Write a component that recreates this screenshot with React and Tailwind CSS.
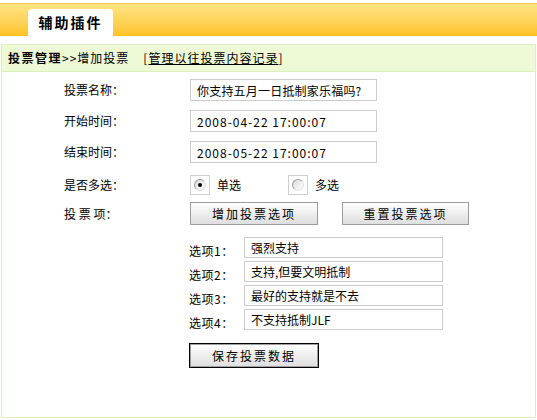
import { useState } from 'react';

const font = { fontFamily: '"Noto Sans CJK SC", "Liberation Sans", sans-serif' };

function Radio({ checked, label, onClick }) {
  return (
    <label className="flex items-center cursor-pointer" onClick={onClick}>
      <span className="w-[20px] h-[20px] border border-[#cfcfcf] flex items-center justify-center bg-white">
        <span className="w-[12px] h-[12px] rounded-full border border-[#9a9a9a] border-b-[#e2e2e2] border-r-[#e2e2e2] bg-gradient-to-br from-[#dcdcdc] to-white flex items-center justify-center">
          {checked && <span className="w-[4px] h-[4px] rounded-full bg-black" />}
        </span>
      </span>
      <span className="ml-[7px] text-[12px]">{label}</span>
    </label>
  );
}

function GrayButton({ children, className = '' }) {
  return (
    <button
      type="button"
      className={`h-[23px] text-[12px] tracking-[2px] text-black bg-gradient-to-b from-white to-[#dedede] border border-[#9c9c9c] flex items-center justify-center ${className}`}
    >
      {children}
    </button>
  );
}

export default function App() {
  const [multi, setMulti] = useState(false);
  const [name, setName] = useState('你支持五月一日抵制家乐福吗?');
  const [start, setStart] = useState('2008-04-22 17:00:07');
  const [end, setEnd] = useState('2008-05-22 17:00:07');
  const [options, setOptions] = useState([
    '强烈支持',
    '支持,但要文明抵制',
    '最好的支持就是不去',
    '不支持抵制JLF',
  ]);

  const inputCls =
    'w-[187px] h-[22px] border border-[#cbcbcb] px-[6px] text-[12px] text-black outline-none bg-white';

  return (
    <div className="w-[537px] h-[420px] bg-white text-black overflow-hidden" style={font}>
      {/* top tab bar */}
      <div className="mt-[3px] h-[33px] border-t border-[#f2c45a] bg-gradient-to-b from-[#ffe584] to-[#ffc21e] flex items-end">
        <div className="ml-[28px] w-[85px] h-[27px] bg-white rounded-t-[4px] flex items-center justify-center text-[14px] font-bold tracking-[2px]">
          辅助插件
        </div>
      </div>

      {/* breadcrumb */}
      <div className="mt-[8px] mx-[1px] h-[28px] bg-[#eef9d6] border border-[#dcefbf] flex items-center pl-[6px] text-[12px] tracking-[1px]">
        <span className="font-bold tracking-[1.5px]">投票管理</span>
        <span>&gt;&gt;增加投票</span>
        <span className="ml-[14px]">[<a href="#" className="underline text-black">管理以往投票内容记录</a>]</span>
      </div>

      {/* form */}
      <div className="mx-[1px] h-[346px] border-l border-r border-b border-[#dcefbf] pt-[7px] text-[12px]">
        <div className="flex items-center h-[22px]">
          <span className="w-[188px] pl-[62px]">投票名称：</span>
          <input className={`${inputCls} tracking-[0.2px]`} value={name} onChange={(e) => setName(e.target.value)} />
        </div>
        <div className="flex items-center h-[22px] mt-[9px]">
          <span className="w-[188px] pl-[62px]">开始时间：</span>
          <input className={`${inputCls} tracking-[1px]`} value={start} onChange={(e) => setStart(e.target.value)} />
        </div>
        <div className="flex items-center h-[22px] mt-[9px]">
          <span className="w-[188px] pl-[62px]">结束时间：</span>
          <input className={`${inputCls} tracking-[1px]`} value={end} onChange={(e) => setEnd(e.target.value)} />
        </div>
        <div className="flex items-center h-[20px] mt-[12px]">
          <span className="w-[188px] pl-[62px]">是否多选：</span>
          <Radio checked={!multi} label="单选" onClick={() => setMulti(false)} />
          <span className="ml-[47px]">
            <Radio checked={multi} label="多选" onClick={() => setMulti(true)} />
          </span>
        </div>
        <div className="flex items-center h-[23px] mt-[7px]">
          <span className="w-[188px] pl-[62px] whitespace-pre">投 票 项：</span>
          <GrayButton className="w-[128px]">增加投票选项</GrayButton>
          <GrayButton className="w-[127px] ml-[24px]">重置投票选项</GrayButton>
        </div>

        <div className="ml-[187px] mt-[12px] flex flex-col gap-[3px]">
          {options.map((opt, i) => (
            <div key={i} className="flex items-center h-[21px]">
              <span className="w-[55px] pt-[6px] tracking-[0.5px]">选项{i + 1}：</span>
              <input
                className="w-[199px] h-[21px] border border-[#cbcbcb] px-[6px] text-[12px] text-black outline-none bg-white"
                value={opt}
                onChange={(e) => {
                  const next = [...options];
                  next[i] = e.target.value;
                  setOptions(next);
                }}
              />
            </div>
          ))}
        </div>

        <div className="ml-[187px] mt-[13px]">
          <button
            type="button"
            className="w-[130px] h-[25px] text-[12px] tracking-[2px] bg-gradient-to-b from-white to-[#dedede] border border-black shadow-[inset_0_0_0_1px_#a0a0a0] flex items-center justify-center"
          >
            保存投票数据
          </button>
        </div>
      </div>
    </div>
  );
}
